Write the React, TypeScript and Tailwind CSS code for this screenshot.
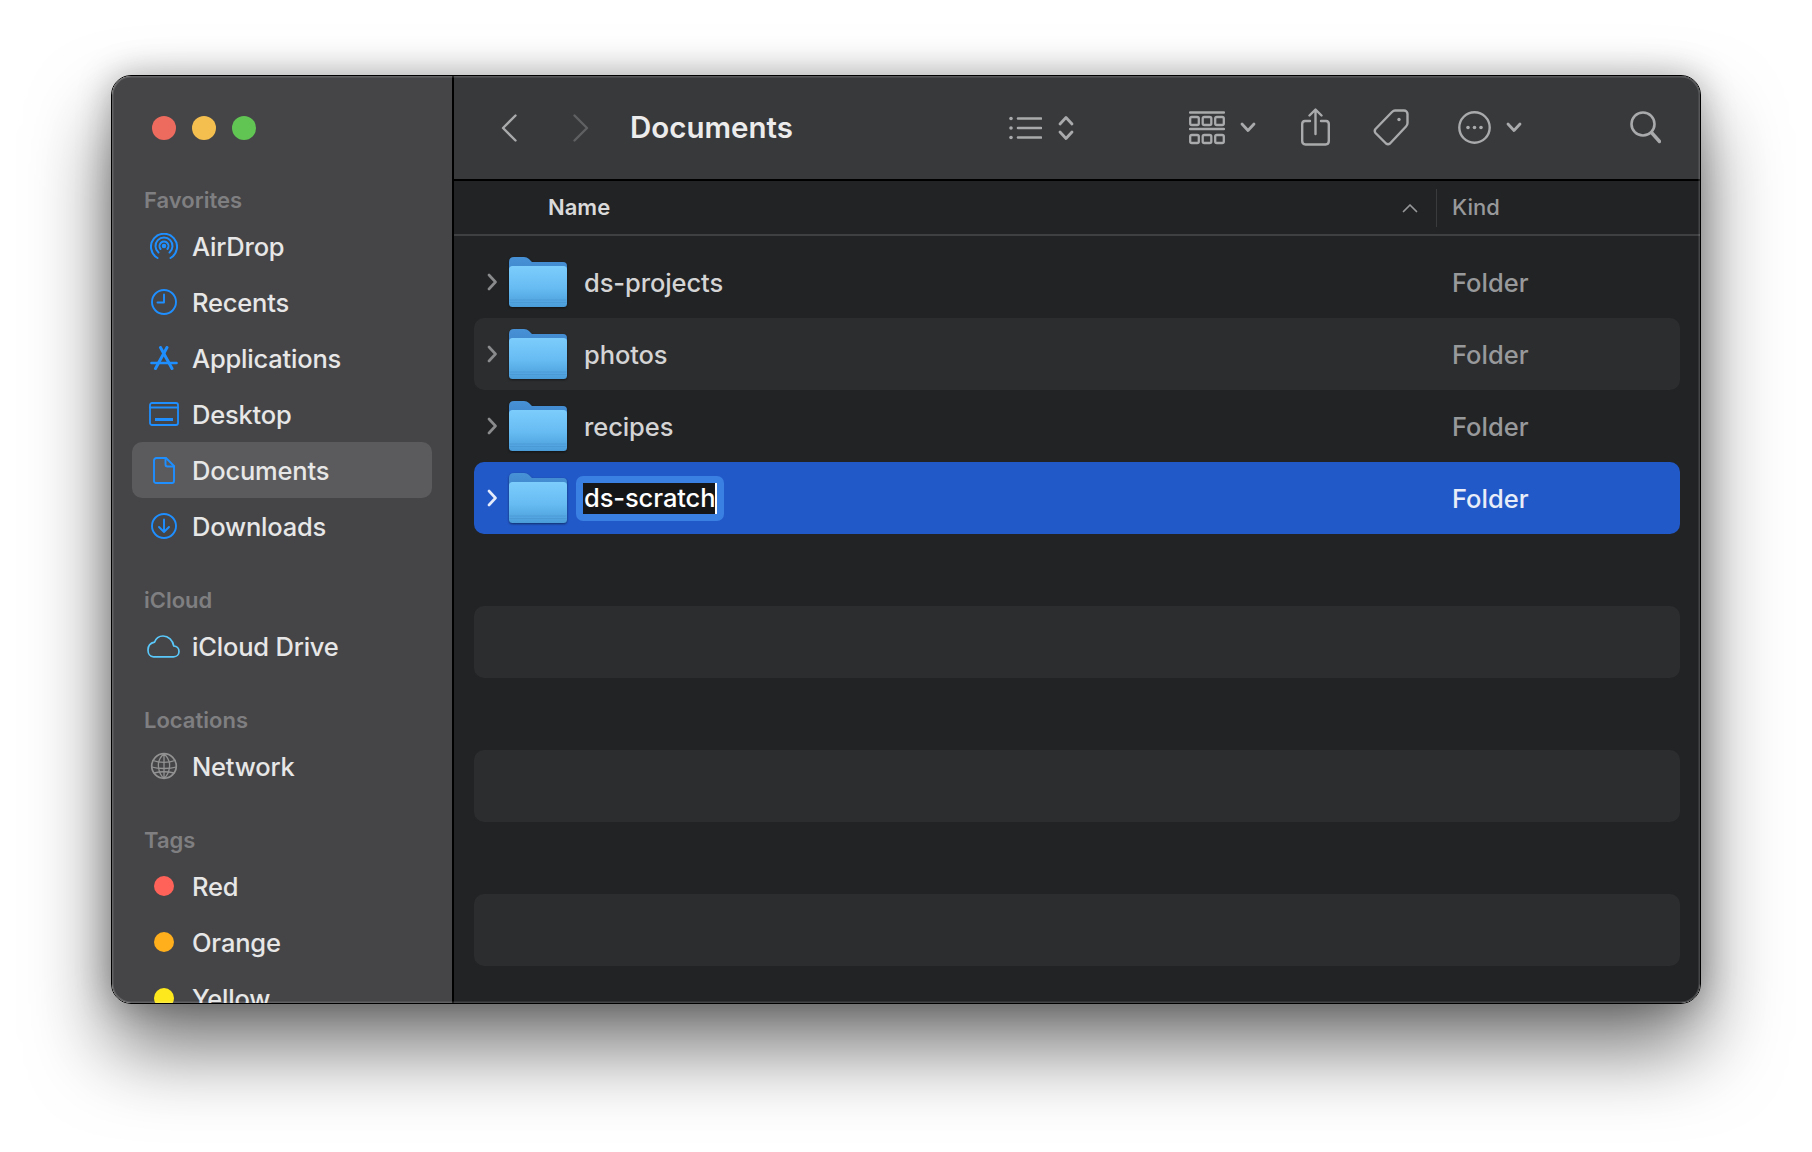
import type { ReactNode } from "react";

const FONT = "font-['Inter','Liberation_Sans',sans-serif]";

function Stroke({ w, h, vb, children, className = "", sw = 2.4 }: { w: number; h: number; vb?: string; children: ReactNode; className?: string; sw?: number }) {
  return (
    <svg width={w} height={h} viewBox={vb ?? `0 0 ${w} ${h}`} fill="none" stroke="currentColor" strokeWidth={sw} strokeLinecap="round" strokeLinejoin="round" className={`shrink-0 ${className}`}>
      {children}
    </svg>
  );
}

// sidebar icons
const AirDrop = () => (
  <Stroke w={28} h={27} sw={2}>
    <path d="M7.5 25 A13 13 0 1 1 20.5 25" />
    <path d="M8.5 19.5 A8.5 8.5 0 1 1 19.5 19.5" />
    <path d="M10.55 16 A4.5 4.5 0 1 1 17.45 16" />
    <circle cx="14" cy="13" r="1.3" fill="currentColor" />
  </Stroke>
);
const Recents = () => (
  <Stroke w={28} h={28} sw={1.9}>
    <circle cx="14" cy="14" r="12" />
    <path d="M14 6.5V14.5H7.5" />
  </Stroke>
);
const Applications = () => (
  <Stroke w={28} h={25}>
    <path d="M10.5 1.5 22 22.5" strokeWidth={3} />
    <path d="M17 1.5 5.5 22.5" strokeWidth={3} />
    <path d="M1.5 17H26.5" strokeWidth={2.6} />
  </Stroke>
);
const Desktop = () => (
  <Stroke w={30} h={24} sw={1.8}>
    <rect x="1" y="1" width="28" height="22" rx="2" />
    <path d="M1 5.5H29" />
    <rect x="6" y="16" width="18" height="3" fill="currentColor" stroke="none" />
  </Stroke>
);
const Doc = () => (
  <Stroke w={22} h={27} sw={1.9}>
    <path d="M3.5 1H13L21 9V24A2 2 0 0 1 19 26H3A2 2 0 0 1 1 24V3.5A2.5 2.5 0 0 1 3.5 1Z" />
    <path d="M12.5 1V7.5A2 2 0 0 0 14.5 9.5H21" />
  </Stroke>
);
const Downloads = () => (
  <Stroke w={28} h={28} sw={1.9}>
    <circle cx="14" cy="14" r="12" />
    <path d="M14 7.5V19.5M9 15l5 5 5-5" />
  </Stroke>
);
const Cloud = () => (
  <Stroke w={33} h={23} sw={1.7} className="-ml-px">
    <path d="M6.5 21.8H26.5C29.8 21.8 32 19.4 32 16.4 32 13.4 29.8 11.2 26.8 11 25.8 5.2 21.5 1 16 1 11.8 1 8.800 3.600 7.500 7.200 3.800 8 1 11 1 15 1 18.800 3.200 21.800 6.500 21.800Z" />
  </Stroke>
);
const Globe = () => (
  <Stroke w={28} h={28} sw={1.3}>
    <circle cx="14" cy="14" r="12.3" strokeWidth={1.7} />
    <path d="M14 1.7C9 6 8 11 8.5 15 9 20 11 24 14 26.3M14 1.7C18.5 6 20 11 19.5 15 19 20 17 24 14 26.3M14 1.7V26.3" />
    <path d="M3 8.5C9 11 19 11 25 8.5M1.7 15C8 17 20 17 26.3 15M4 21C10 19.5 18 19.5 24 21" />
  </Stroke>
);

function TagDot({ color }: { color: string }) {
  return <div className={`h-5 w-5 rounded-full ${color}`} />;
}

function Section({ title, children, first }: { title: string; children: ReactNode; first?: boolean }) {
  return (
    <div className={first ? "" : "mt-[26px]"}>
      <div className="flex h-[38px] items-center pt-[2px] pl-3 text-[22px] font-semibold text-[#7f7f81]">{title}</div>
      {children}
    </div>
  );
}

function SideItem({ icon, label, active, color = "text-[#1f8fff]" }: { icon: ReactNode; label: string; active?: boolean; color?: string }) {
  return (
    <div className={`flex h-14 items-center rounded-[10px] ${active ? "bg-[#5b5b5d]" : ""}`}>
      <div className={`flex w-[61px] shrink-0 items-center justify-center pl-[3px] ${color}`}>{icon}</div>
      <span className="-ml-px pt-px text-[25.5px] leading-none font-[450] tracking-[-0.2px] whitespace-nowrap text-[#e7e7e7]">{label}</span>
    </div>
  );
}

function Folder({ id }: { id: string }) {
  return (
    <svg width="58" height="52" viewBox="0 0 58 52" className="shrink-0 drop-shadow-[0_1px_1px_rgba(0,0,0,0.5)]">
      <defs>
        <linearGradient id={`front-${id}`} x1="0" y1="0" x2="0" y2="1">
          <stop offset="0" stopColor="#7ccdfc" />
          <stop offset="0.55" stopColor="#66bbf2" />
          <stop offset="1" stopColor="#4a9cd9" />
        </linearGradient>
        <linearGradient id={`back-${id}`} x1="0" y1="0" x2="0" y2="1">
          <stop offset="0" stopColor="#4791d6" />
          <stop offset="1" stopColor="#3a80c6" />
        </linearGradient>
      </defs>
      <path d="M0 6Q0 1 5 1H15Q18 1 20 3L23 6H54Q58 6 58 10V30H0Z" fill={`url(#back-${id})`} />
      <rect x="0" y="10" width="58" height="41" rx="3.5" fill={`url(#front-${id})`} />
      <path d="M0.5 44H57.5M0.5 46.5H57.5" stroke="#4795d0" strokeWidth="0.8" opacity="0.8" />
    </svg>
  );
}

function Row({ name, stripe, id }: { name: string; stripe?: boolean; id: string }) {
  return (
    <div className={`flex h-[72px] items-center rounded-[10px] pl-[13px] ${stripe ? "bg-[#2c2d2f]" : ""}`}>
      <Stroke w={10} h={18} sw={2.6} className="text-[#8a8b8c]">
        <path d="M2 2l6.5 7L2 16" />
      </Stroke>
      <div className="ml-3">
        <Folder id={id} />
      </div>
      <span className="ml-[17px] flex-1 pt-px text-[25.5px] leading-none font-[450] tracking-[-0.1px] text-[#d4d4d5]">{name}</span>
      <span className="w-[228px] pt-px text-[25.5px] leading-none font-[450] text-[#98999b]">Folder</span>
    </div>
  );
}

function SelectedRow() {
  return (
    <div className="flex h-[72px] items-center rounded-[10px] bg-[#2259c9] pl-[13px]">
      <Stroke w={10} h={18} sw={2.6} className="text-[#e4ecfb]">
        <path d="M2 2l6.5 7L2 16" />
      </Stroke>
      <div className="ml-3">
        <Folder id="sel" />
      </div>
      <div className="ml-[9px] flex-1">
        <div className="inline-flex h-[45px] items-center rounded-[7px] bg-[#3a7fe2] px-[7px]">
          <div className="flex h-[31px] items-center border-r-2 border-white bg-[#151617] pl-px text-[25.5px] leading-none font-[450] tracking-[-0.1px] text-white">ds-scratch</div>
        </div>
      </div>
      <span className="w-[228px] pt-px text-[25.5px] leading-none font-[450] text-[#e8edf8]">Folder</span>
    </div>
  );
}

export default function App() {
  return (
    <div className={`h-[1152px] w-[1812px] overflow-hidden bg-white pt-[75px] pl-[111px] ${FONT}`}>
      <div className="relative h-[929px] w-[1590px] rounded-[20px] shadow-[0_44px_80px_rgba(0,0,0,0.55),0_0_34px_rgba(0,0,0,0.28)]">
        <div className="flex h-full overflow-hidden rounded-[20px] border border-black">
          {/* Sidebar */}
          <aside className="flex h-full w-[342px] shrink-0 flex-col overflow-hidden border-r-2 border-black bg-[#454547] px-5">
            <div className="flex h-[104px] shrink-0 items-center gap-4 pl-5">
              <div className="h-6 w-6 rounded-full bg-[#ed6a5e]" />
              <div className="h-6 w-6 rounded-full bg-[#f4bf4f]" />
              <div className="h-6 w-6 rounded-full bg-[#61c554]" />
            </div>
            <Section title="Favorites" first>
              <SideItem icon={<AirDrop />} label="AirDrop" />
              <SideItem icon={<Recents />} label="Recents" />
              <SideItem icon={<Applications />} label="Applications" />
              <SideItem icon={<Desktop />} label="Desktop" />
              <SideItem icon={<Doc />} label="Documents" active />
              <SideItem icon={<Downloads />} label="Downloads" />
            </Section>
            <Section title="iCloud">
              <SideItem icon={<Cloud />} label="iCloud Drive" color="text-[#5ac8fa]" />
            </Section>
            <Section title="Locations">
              <SideItem icon={<Globe />} label="Network" color="text-[#929293]" />
            </Section>
            <Section title="Tags">
              <SideItem icon={<TagDot color="bg-[#ff6259]" />} label="Red" />
              <SideItem icon={<TagDot color="bg-[#ffae1c]" />} label="Orange" />
              <SideItem icon={<TagDot color="bg-[#fce81c]" />} label="Yellow" />
            </Section>
          </aside>

          {/* Main */}
          <main className="flex min-w-0 flex-1 flex-col bg-[#222325]">
            <div className="flex h-[105px] shrink-0 items-center border-b-2 border-black bg-[#38393b] pl-[47px] text-[#a9aaab]">
              <Stroke w={16} h={28} sw={2.4}>
                <path d="M14.5 1.5 2 14l12.5 12.5" />
              </Stroke>
              <Stroke w={16} h={28} sw={2.4} className="ml-14 text-[#5f6062]">
                <path d="M1.5 1.5 14 14 1.5 26.5" />
              </Stroke>
              <div className="ml-[41px] w-[379px] text-[29.5px] leading-none font-semibold text-[#ececec]">Documents</div>
              <Stroke w={33} h={24} sw={2.6}>
                <path d="M9 2.5H32M9 12H32M9 21.5H32" />
                <circle cx="2" cy="2.5" r="1.8" fill="currentColor" stroke="none" />
                <circle cx="2" cy="12" r="1.8" fill="currentColor" stroke="none" />
                <circle cx="2" cy="21.5" r="1.8" fill="currentColor" stroke="none" />
              </Stroke>
              <Stroke w={16} h={26} sw={2.8} className="ml-4">
                <path d="M2 9l6-6.5L14 9M2 17l6 6.5 6-6.5" />
              </Stroke>
              <Stroke w={36} h={34} sw={2.3} className="ml-[115px]">
                <path d="M1 1.5H35M1 18H35" />
                <rect x="1.200" y="6" width="8.600" height="8" rx="1.600" />
                <rect x="13.700" y="6" width="8.600" height="8" rx="1.600" />
                <rect x="26.200" y="6" width="8.600" height="8" rx="1.600" />
                <rect x="1.200" y="24" width="8.600" height="8" rx="1.600" />
                <rect x="13.700" y="24" width="8.600" height="8" rx="1.600" />
                <rect x="26.200" y="24" width="8.600" height="8" rx="1.600" />
              </Stroke>
              <Stroke w={16} h={11} sw={2.8} className="ml-[15px]">
                <path d="M2 2l6 6.5L14 2" />
              </Stroke>
              <Stroke w={29} h={38} sw={2.4} className="-mt-[2px] ml-[45px]">
                <path d="M9 13H4A3 3 0 0 0 1.200 16V33A3.500 3.500 0 0 0 4.500 36.500H24.500A3.500 3.500 0 0 0 27.800 33V16A3 3 0 0 0 25 13H20" />
                <path d="M14.500 26V2M8.500 7.500l6-6 6 6" />
              </Stroke>
              <Stroke w={36} h={37} sw={2.4} className="ml-[43px]">
                <path d="M22 1.500H31A3.500 3.500 0 0 1 34.500 5V14Q34.500 16 33 17.500L17 34.500Q15 36 13 34.500L2.500 24Q1 22 2.500 20L19 3Q20.500 1.500 22 1.500Z" />
                <circle cx="26" cy="10.500" r="1.700" fill="currentColor" stroke="none" />
              </Stroke>
              <Stroke w={33} h={33} sw={2.4} className="ml-[49px]">
                <circle cx="16.500" cy="16.500" r="15.200" />
                <circle cx="10" cy="16.500" r="1.800" fill="currentColor" stroke="none" />
                <circle cx="16.500" cy="16.500" r="1.800" fill="currentColor" stroke="none" />
                <circle cx="23" cy="16.500" r="1.800" fill="currentColor" stroke="none" />
              </Stroke>
              <Stroke w={16} h={11} sw={2.8} className="ml-[15px]">
                <path d="M2 2l6 6.500L14 2" />
              </Stroke>
              <Stroke w={31} h={33} sw={2.6} className="ml-[108px]">
                <circle cx="13" cy="13" r="11.500" />
                <path d="M21.500 21.500 29.500 30.500" strokeWidth={3.4} />
              </Stroke>
            </div>

            <div className="flex h-[55px] shrink-0 items-center border-b-2 border-[#3f4042] pb-[2px] pl-[94px]">
              <span className="flex-1 text-[22px] leading-none font-semibold text-[#dadada]">Name</span>
              <Stroke w={16} h={10} sw={1.7} className="mt-[2px] text-[#97989a]">
                <path d="M1.500 8.500 8 2l6.500 6.500" />
              </Stroke>
              <div className="mt-[2px] mr-[15px] ml-[18px] h-[38px] w-px bg-[#3a3b3d]" />
              <span className="w-[248px] text-[22px] leading-none font-[450] text-[#98999b]">Kind</span>
            </div>

            <div className="flex flex-1 flex-col px-5 pt-2.5">
              <Row name="ds-projects" id="a" />
              <Row name="photos" id="b" stripe />
              <Row name="recipes" id="c" />
              <SelectedRow />
              <div className="h-[72px] shrink-0" />
              <div className="h-[72px] shrink-0 rounded-[10px] bg-[#2c2d2f]" />
              <div className="h-[72px] shrink-0" />
              <div className="h-[72px] shrink-0 rounded-[10px] bg-[#2c2d2f]" />
              <div className="h-[72px] shrink-0" />
              <div className="h-[72px] shrink-0 rounded-[10px] bg-[#2c2d2f]" />
            </div>
          </main>
        </div>
        {/* window edge highlight */}
        <div className="pointer-events-none absolute inset-px rounded-[19px] shadow-[inset_0_0_0_1.5px_rgba(255,255,255,0.16)]" />
      </div>
    </div>
  );
}
